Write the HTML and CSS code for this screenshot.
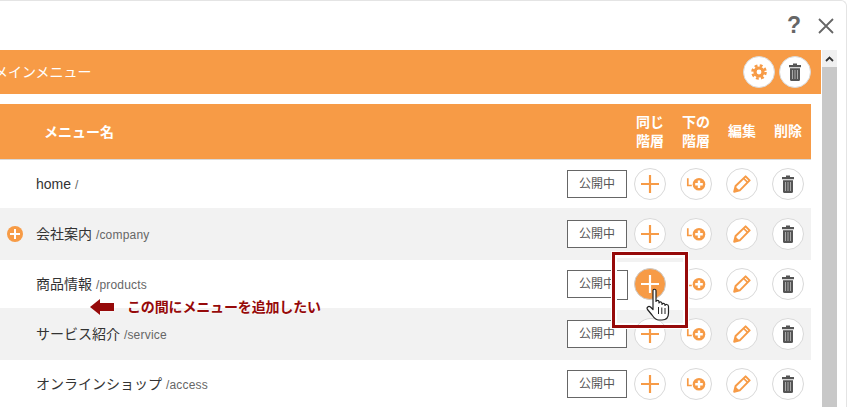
FILE: index.html
```html
<!DOCTYPE html>
<html lang="ja">
<head>
<meta charset="utf-8">
<title>メインメニュー</title>
<link rel="stylesheet" href="styles.css">
</head>
<body>
<svg class="defs" width="0" height="0" aria-hidden="true">
  <symbol id="i-plus" viewBox="0 0 18 18"><path d="M9 0v18M0 9h18" stroke-width="2.200" stroke="currentColor" fill="none"/></symbol>
  <symbol id="i-child" viewBox="0 0 22 14"><path d="M2.800 1.200v7.300H6.800" stroke="#f79b46" stroke-width="1.700" fill="none"/><circle cx="14" cy="7.300" r="6.300" fill="#f79b46"/><path d="M14 3.500v7.600M10.200 7.300h7.600" stroke="#fff" stroke-width="2.400"/></symbol>
  <symbol id="i-pencil" viewBox="0 0 18 18"><path d="M1.200 16.800 2.600 11 12.600 1.400l4 4L6.800 15.400Z" fill="none" stroke="#f79b46" stroke-width="2" stroke-linejoin="round"/><path d="M1 17l1.200-5.600 4.400 4.200Z" fill="#f79b46"/><path d="M10.600 3.400l4 4" stroke="#f79b46" stroke-width="1.600"/></symbol>
  <symbol id="i-trash" viewBox="0 0 12 18"><path d="M4 .5h4V2h4v2.200H0V2h4Z" fill="#555"/><path d="M1 5.200h10V16.500a1.500 1.500 0 0 1-1.500 1.500h-7A1.500 1.500 0 0 1 1 16.500Z" fill="#555"/><path d="M3.500 7v9M6 7v9M8.500 7v9" stroke="#aaa" stroke-width="1"/></symbol>
  <symbol id="i-gear" viewBox="0 0 16 16"><circle cx="8" cy="8" r="4" fill="none" stroke="#f79b46" stroke-width="3.200"/><circle cx="8" cy="8" r="6.500" fill="none" stroke="#f79b46" stroke-width="2.600" stroke-dasharray="2.800 2.300"/></symbol>
</svg>

<div class="frame">
  <header class="topbar">
    <span class="help">?</span>
    <svg class="close" viewBox="0 0 16 16"><path d="M1 1l14 14M15 1 1 15" stroke="#666" stroke-width="1.800" fill="none"/></svg>
  </header>

  <div class="content">
    <main class="main">
      <div class="menubar">
        <span class="menubar-title">メインメニュー</span>
        <div class="menubar-tools">
          <span class="round round-bar"><svg class="ic-gear"><use href="#i-gear"/></svg></span>
          <span class="round round-bar"><svg class="ic-trash"><use href="#i-trash"/></svg></span>
        </div>
      </div>

      <div class="thead">
        <span class="th-name">メニュー名</span>
        <span class="th">同じ<br>階層</span>
        <span class="th">下の<br>階層</span>
        <span class="th">編集</span>
        <span class="th">削除</span>
      </div>

      <div class="row">
        <span class="slot"></span>
        <span class="name">home <small>/</small></span>
        <span class="status">公開中</span>
        <span class="cell"><span class="round"><svg class="ic-plus"><use href="#i-plus"/></svg></span></span>
        <span class="cell"><span class="round"><svg class="ic-child"><use href="#i-child"/></svg></span></span>
        <span class="cell"><span class="round"><svg class="ic-pencil"><use href="#i-pencil"/></svg></span></span>
        <span class="cell"><span class="round"><svg class="ic-trash"><use href="#i-trash"/></svg></span></span>
      </div>
      <div class="row row-alt">
        <span class="slot"><span class="slot-add"><svg viewBox="0 0 10 10"><path d="M5 0v10M0 5h10" stroke="#fff" stroke-width="2"/></svg></span></span>
        <span class="name">会社案内 <small>/company</small></span>
        <span class="status">公開中</span>
        <span class="cell"><span class="round"><svg class="ic-plus"><use href="#i-plus"/></svg></span></span>
        <span class="cell"><span class="round"><svg class="ic-child"><use href="#i-child"/></svg></span></span>
        <span class="cell"><span class="round"><svg class="ic-pencil"><use href="#i-pencil"/></svg></span></span>
        <span class="cell"><span class="round"><svg class="ic-trash"><use href="#i-trash"/></svg></span></span>
      </div>
      <div class="row">
        <span class="slot"></span>
        <span class="name">商品情報 <small>/products</small></span>
        <span class="status">公開中</span>
        <span class="cell"><span class="round"><svg class="ic-plus"><use href="#i-plus"/></svg></span></span>
        <span class="cell"><span class="round"><svg class="ic-child"><use href="#i-child"/></svg></span></span>
        <span class="cell"><span class="round"><svg class="ic-pencil"><use href="#i-pencil"/></svg></span></span>
        <span class="cell"><span class="round"><svg class="ic-trash"><use href="#i-trash"/></svg></span></span>
      </div>
      <div class="row row-alt">
        <span class="slot"></span>
        <span class="name">サービス紹介 <small>/service</small></span>
        <span class="status">公開中</span>
        <span class="cell"><span class="round"><svg class="ic-plus"><use href="#i-plus"/></svg></span></span>
        <span class="cell"><span class="round"><svg class="ic-child"><use href="#i-child"/></svg></span></span>
        <span class="cell"><span class="round"><svg class="ic-pencil"><use href="#i-pencil"/></svg></span></span>
        <span class="cell"><span class="round"><svg class="ic-trash"><use href="#i-trash"/></svg></span></span>
      </div>
      <div class="row">
        <span class="slot"></span>
        <span class="name">オンラインショップ <small>/access</small></span>
        <span class="status">公開中</span>
        <span class="cell"><span class="round"><svg class="ic-plus"><use href="#i-plus"/></svg></span></span>
        <span class="cell"><span class="round"><svg class="ic-child"><use href="#i-child"/></svg></span></span>
        <span class="cell"><span class="round"><svg class="ic-pencil"><use href="#i-pencil"/></svg></span></span>
        <span class="cell"><span class="round"><svg class="ic-trash"><use href="#i-trash"/></svg></span></span>
      </div>
    </main>
    <div class="scrollbar">
      <div class="scroll-up"><svg viewBox="0 0 9 6"><path d="M1 5l3.500-3.500L8 5" stroke="#333" stroke-width="1.800" fill="none"/></svg></div>
      <div class="scroll-thumb"></div>
    </div>
  </div>
</div>

<div class="callout">
  <svg class="callout-arrow" viewBox="0 0 24 16"><path d="M0 8 10 0v4h14v8H10v4Z" fill="#960a0a"/></svg>
  <span class="callout-text">この間にメニューを追加したい</span>
</div>

<div class="highlight">
  <span class="round round-on"><svg class="ic-plus"><use href="#i-plus"/></svg></span>
</div>

<svg class="hand" viewBox="0 0 25 33">
  <path d="M7 2.500C7 .8 10 .8 10 2.500V13.500C10 12 13 12 13 13.800V15C13 13.500 16 13.500 16 15.500V16.500C16 15 19 15 19 17V17.500C19 16 22.500 16 22.500 18.500V25C22.500 29 20.500 32 16 32H13C9.500 32 8 30 6 27L1.500 21.500C.2 19.500 2.500 17.500 4.500 19L7 21.500Z" fill="#fff" stroke="#222" stroke-width="1.200" stroke-linejoin="round"/>
  <path d="M12.500 19v7M15.800 19.500v6.500M19 20v6" stroke="#222" stroke-width="1" fill="none"/>
</svg>
</body>
</html>
```

FILE: styles.css
```css
* { box-sizing: border-box; }
html, body { margin: 0; padding: 0; height: 100%; overflow: hidden; background: #fff; }
body {
  position: relative;
  font-family: "Liberation Sans", "Noto Sans CJK JP", sans-serif;
  font-size: 14px;
  line-height: 20px;
  color: #333;
}
.defs { position: absolute; }

.frame {
  width: 847px;
  height: 407px;
  border-top: 1px solid #e4e4e4;
  border-right: 1px solid #e4e4e4;
  border-top-right-radius: 6px;
  overflow: hidden;
}
.topbar {
  height: 49px;
  display: flex;
  align-items: center;
  justify-content: flex-end;
  padding: 0 12px 0 0;
  gap: 17px;
}
.help {
  font-size: 23px;
  font-weight: 700;
  line-height: 1;
  color: #666;
  width: 14px;
  text-align: center;
}
.close { width: 16px; height: 16px; display: block; }

.content { display: flex; align-items: flex-start; height: 357px; }
.main { width: 832px; margin-left: -11px; flex: none; }

.menubar {
  height: 44px;
  background: #f79b46;
  display: flex;
  align-items: center;
  justify-content: space-between;
  padding: 0 11px 0 5px;
}
.menubar-title { color: #fff; font-size: 14px; }
.menubar-tools { display: flex; gap: 4px; margin-right: -1px; }

.thead {
  height: 56px;
  margin: 10px 10px 0 0;
  background: #f79b46;
  border-bottom: 1px solid #d9d9d9;
  display: flex;
  align-items: center;
  color: #fff;
  font-weight: 700;
}
.th-name { flex: 1; padding-left: 55px; }
.th { width: 46px; text-align: center; line-height: 19px; }

.row {
  height: 48px;
  margin-right: 10px;
  display: flex;
  align-items: center;
  padding-left: 18px;
  background: #fff;
}
.row-alt { height: 52px; background: #f2f2f2; }
.slot { width: 16px; height: 16px; margin-right: 13px; flex: none; }
.slot-add {
  display: flex;
  align-items: center;
  justify-content: center;
  width: 16px;
  height: 16px;
  border-radius: 50%;
  background: #f79b46;
}
.slot-add svg { width: 10px; height: 10px; }
.name { flex: 1; white-space: nowrap; }
.name small { font-size: 12px; letter-spacing: .2px; color: #666; }

.status {
  width: 60px;
  height: 28px;
  border: 1px solid #666;
  background: #fff;
  font-size: 12px;
  color: #555;
  display: flex;
  align-items: center;
  justify-content: center;
  flex: none;
}
.cell { width: 46px; display: flex; justify-content: center; flex: none; }

.round {
  width: 32px;
  height: 32px;
  border-radius: 50%;
  border: 1px solid #d9d9d9;
  background: #fff;
  display: flex;
  align-items: center;
  justify-content: center;
  color: #f79b46;
}
.round svg { display: block; }
.ic-plus { width: 18px; height: 18px; }
.ic-child { width: 22px; height: 14px; }
.ic-pencil { width: 18px; height: 18px; }
.ic-trash { width: 12px; height: 18px; }
.ic-gear { width: 16px; height: 16px; }

.scrollbar { width: 15px; margin-left: 1px; height: 357px; flex: none; background: #c8c8c8; }
.scroll-up {
  height: 17px;
  background: #f0f0f0;
  display: flex;
  align-items: center;
  justify-content: center;
}
.scroll-up svg { width: 9px; height: 6px; }

.callout {
  position: absolute;
  left: 90px;
  top: 299px;
  display: flex;
  align-items: center;
  gap: 13px;
  height: 16px;
}
.callout-arrow { width: 24px; height: 16px; filter: drop-shadow(0 0 1px #fff); }
.callout-text {
  font-size: 14px;
  letter-spacing: -.15px;
  font-weight: 700;
  color: #960a0a;
  white-space: nowrap;
  text-shadow: 0 0 2px #fff, 0 0 2px #fff;
}

.highlight {
  position: absolute;
  left: 612px;
  top: 252px;
  width: 76px;
  height: 76px;
  border: 3px solid #960a0a;
  box-shadow: 0 0 0 1px #fff, inset 0 0 0 2px #fff;
  background: linear-gradient(#fff 0 1px, #f2f2f2 1px 5px, #fff 5px 53px, #f2f2f2 53px 100%) 2px 2px / 66px 66px no-repeat;
  overflow: hidden;
}
.highlight::before {
  content: "";
  position: absolute;
  left: 2px;
  top: 15px;
  width: 10px;
  height: 28px;
  border: 1px solid #666;
  border-left: 0;
  background: #fff;
}
.highlight::after {
  content: "";
  position: absolute;
  left: 19px;
  top: 63px;
  width: 32px;
  height: 32px;
  border-radius: 50%;
  border: 1px solid #d9d9d9;
  background: #fff;
  clip-path: inset(0 0 27px 0);
}
.round-on {
  position: absolute;
  left: 19px;
  top: 13px;
  background: #f79b46;
  border-color: #ccc;
  color: #fff;
}
.hand {
  position: absolute;
  left: 646px;
  top: 288px;
  width: 25px;
  height: 33px;
}
```
